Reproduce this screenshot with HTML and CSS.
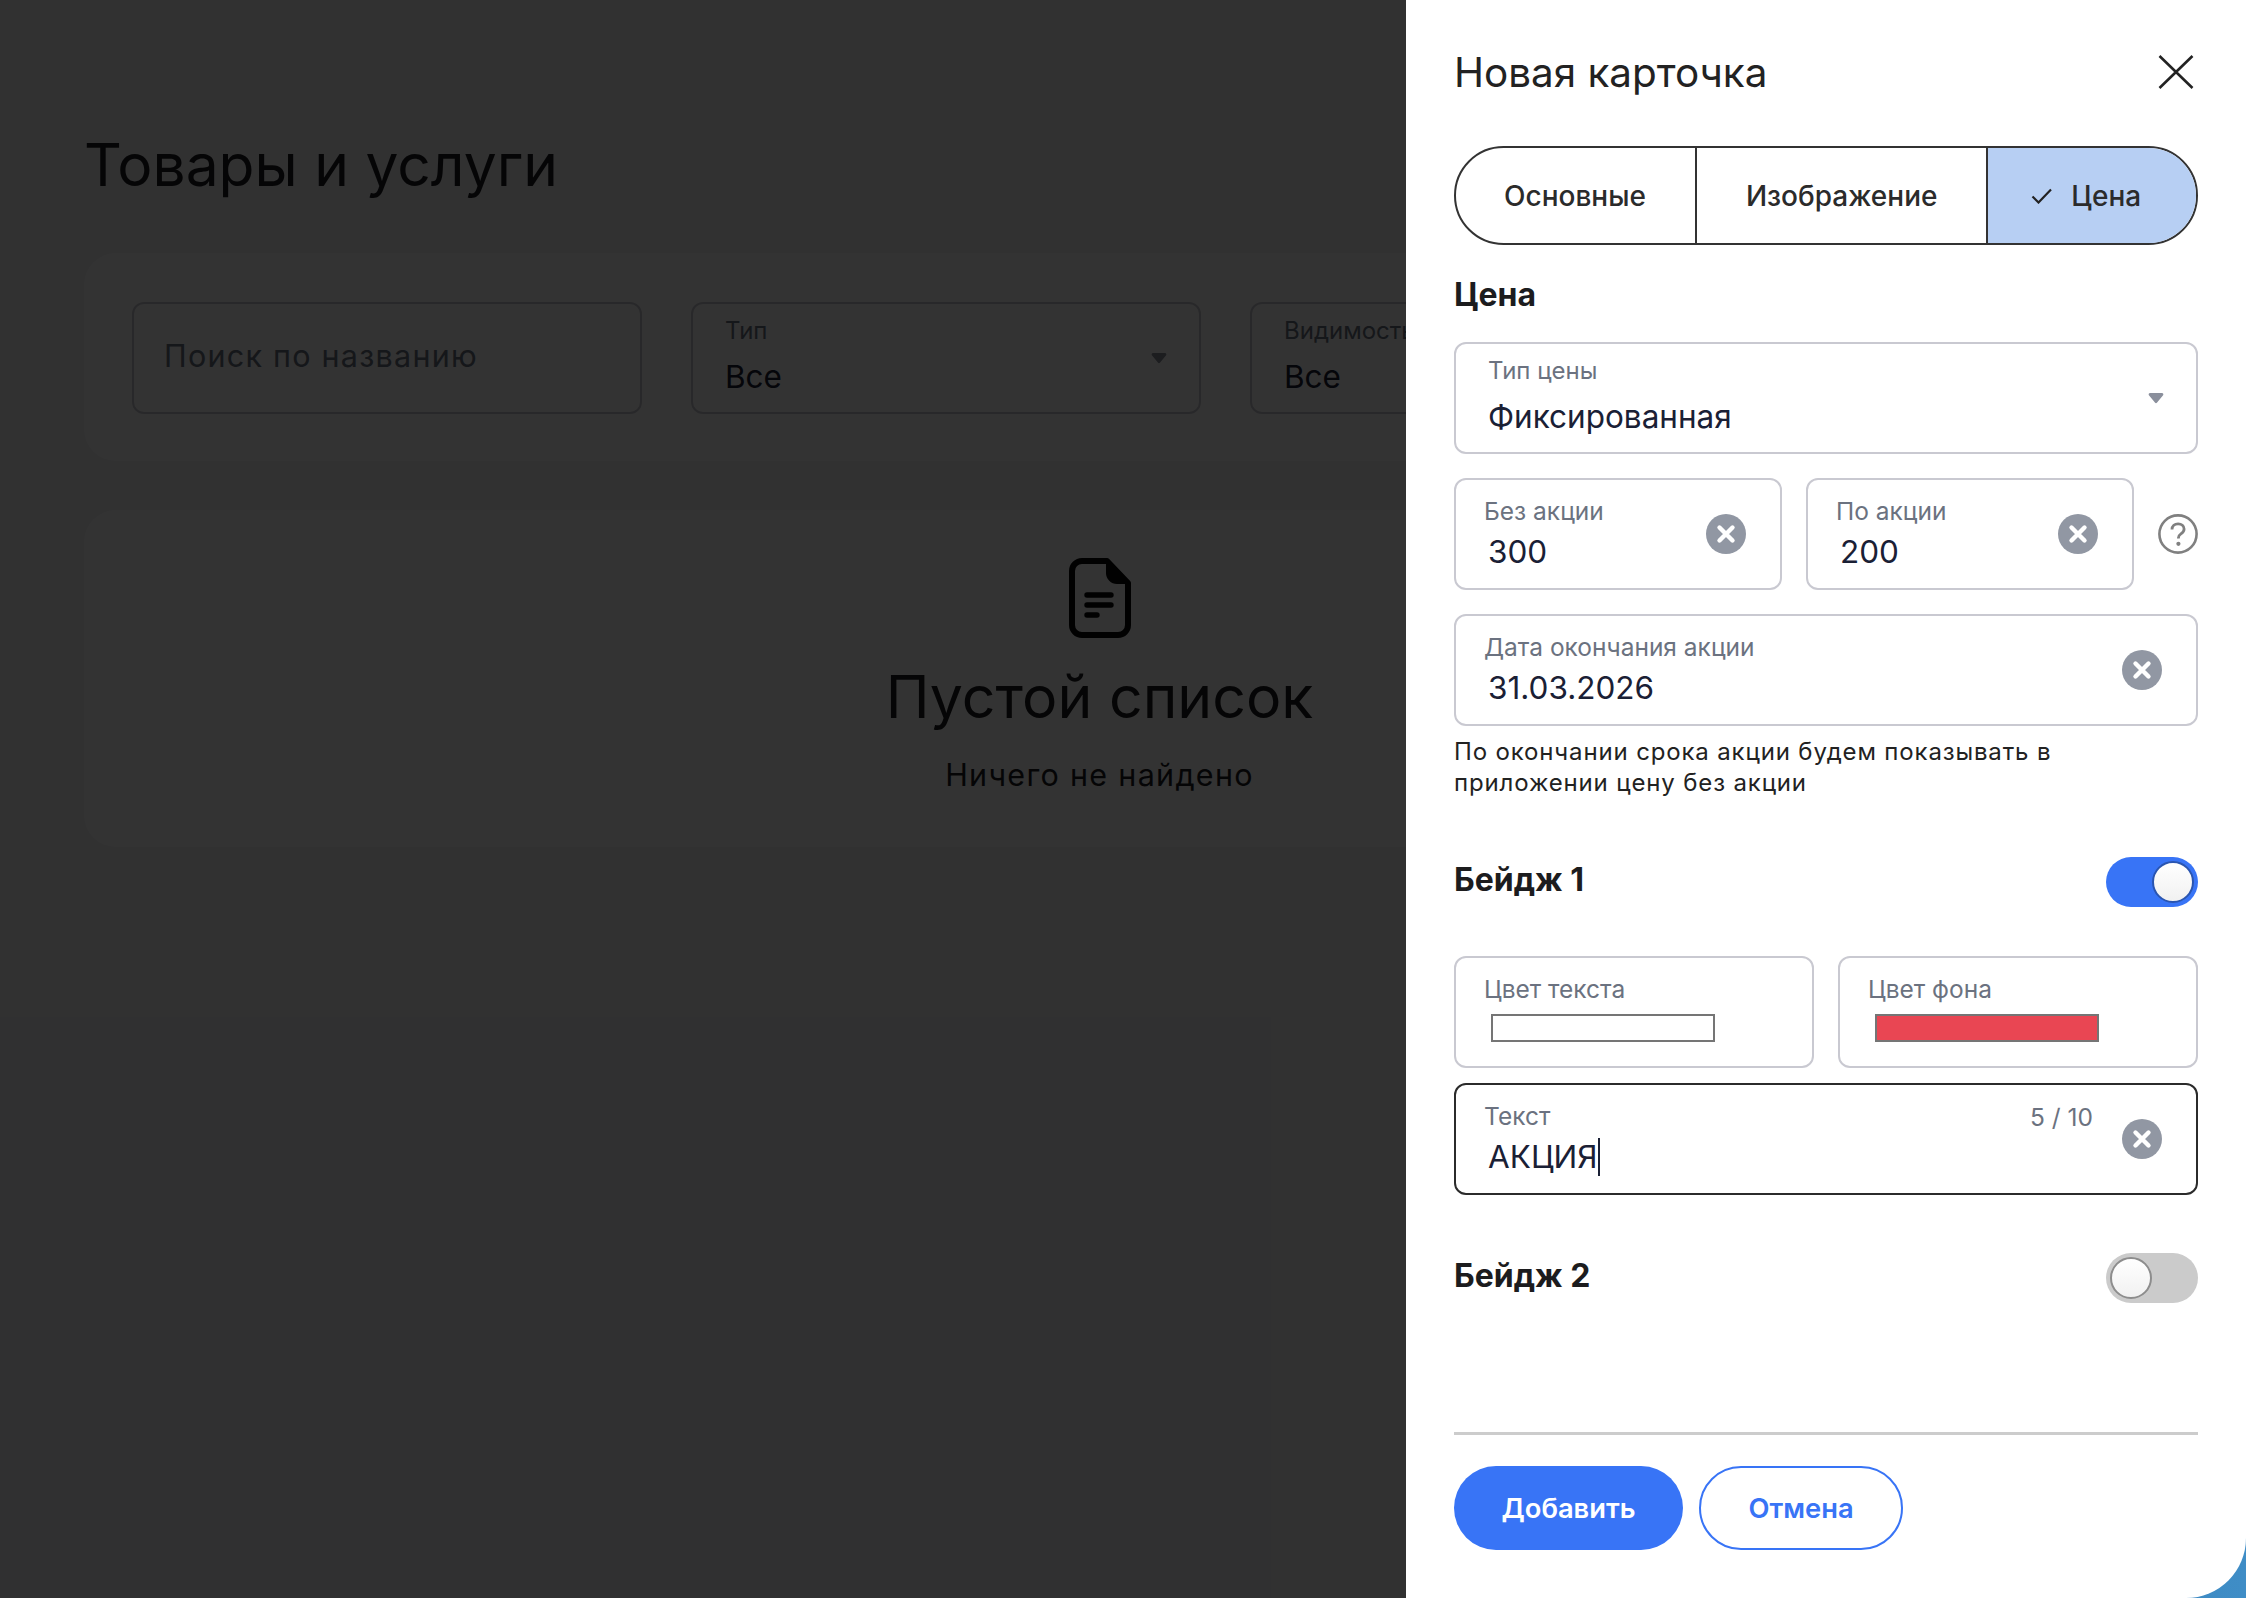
FILE: index.html
```html
<!DOCTYPE html>
<html lang="ru">
<head>
  <meta charset="UTF-8" />
  <meta name="viewport" content="width=device-width, initial-scale=1.0"/>
  <title>Товары и услуги</title>
  <link rel="stylesheet" href="styles.css">
</head>
<body>
  <svg class="sprite" width="0" height="0">
    <symbol id="clear" viewBox="0 0 40 40">
      <circle cx="20" cy="20" r="20" fill="#9197a3"/>
      <path d="M13.5 13.5l13 13M26.5 13.5l-13 13" stroke="#fff" stroke-width="4.4" stroke-linecap="round"/>
    </symbol>
    <symbol id="arrow" viewBox="0 0 16 12">
      <path d="M2 1h12a1.4 1.4 0 0 1 1.1 2.2l-6 7.4a1.4 1.4 0 0 1-2.2 0l-6-7.4A1.4 1.4 0 0 1 2 1z" fill="currentColor"/>
    </symbol>
  </svg>

  <main class="page">
    <h1 class="page-title">Товары и услуги</h1>

    <section class="card filters">
      <div class="field filter">
        <span class="placeholder">Поиск по названию</span>
      </div>
      <div class="field filter select">
        <span class="select-label">Тип</span>
        <span class="select-value">Все</span>
        <svg class="select-arrow"><use href="#arrow"/></svg>
      </div>
      <div class="field filter select">
        <span class="select-label">Видимость</span>
        <span class="select-value">Все</span>
        <svg class="select-arrow"><use href="#arrow"/></svg>
      </div>
    </section>

    <section class="card empty">
      <svg class="empty-icon" width="62" height="80" viewBox="0 0 62 80" fill="none">
        <path d="M13 3h25l21 22v42a10 10 0 0 1-10 10H13A10 10 0 0 1 3 67V13A10 10 0 0 1 13 3z" stroke="#060606" stroke-width="6" stroke-linejoin="round"/>
        <path d="M37 3v12a11 11 0 0 0 11 11h11z" fill="#060606"/>
        <path d="M18 37h24M18 47h24M18 57h10" stroke="#060606" stroke-width="5.400" stroke-linecap="round"/>
      </svg>
      <h2 class="empty-title">Пустой список</h2>
      <p class="empty-text">Ничего не найдено</p>
    </section>
  </main>

  <div class="overlay"></div>

  <div class="drawer-shell">
    <aside class="drawer">
      <header class="drawer-head">
        <h2 class="drawer-title">Новая карточка</h2>
        <button class="close" aria-label="Закрыть">
          <svg width="36" height="36" viewBox="0 0 36 36"><path d="M1.5 2l33 32M34.5 2l-33 32" stroke="#222" stroke-width="2.6" fill="none"/></svg>
        </button>
      </header>

      <div class="tabs">
        <button class="tab">Основные</button>
        <button class="tab">Изображение</button>
        <button class="tab tab-active">
          <svg width="22" height="16" viewBox="0 0 22 16"><path d="M1.5 8.5l6 6L20 1.5" stroke="#222" stroke-width="2.2" fill="none"/></svg>
          Цена
        </button>
      </div>

      <h3 class="section-title">Цена</h3>

      <div class="form-rows">
        <div class="field select">
          <span class="select-label">Тип цены</span>
          <span class="select-value">Фиксированная</span>
          <svg class="select-arrow"><use href="#arrow"/></svg>
        </div>

        <div class="price-row">
          <div class="field input">
            <div class="input-body">
              <span class="input-label">Без акции</span>
              <span class="input-value">300</span>
            </div>
            <svg class="clear"><use href="#clear"/></svg>
          </div>
          <div class="field input">
            <div class="input-body">
              <span class="input-label">По акции</span>
              <span class="input-value">200</span>
            </div>
            <svg class="clear"><use href="#clear"/></svg>
          </div>
          <svg class="help" width="40" height="40" viewBox="0 0 40 40" fill="none">
            <circle cx="20" cy="20" r="18.6" stroke="#808080" stroke-width="2.6"/>
            <path d="M14 15.500c0-3.600 2.700-5.700 6.100-5.700 3.500 0 6 2.100 6 5.200 0 2.500-1.400 3.700-3.200 4.900-1.600 1.100-2.500 2-2.500 4v.6" stroke="#808080" stroke-width="2.800"/>
            <circle cx="20.400" cy="29.800" r="2.100" fill="#808080"/>
          </svg>
        </div>

        <div class="field input">
          <div class="input-body">
            <span class="input-label">Дата окончания акции</span>
            <span class="input-value">31.03.2026</span>
          </div>
          <svg class="clear"><use href="#clear"/></svg>
        </div>
      </div>

      <p class="hint">По окончании срока акции будем показывать в<br>приложении цену без акции</p>

      <div class="badge-head badge-first">
        <h3 class="badge-title">Бейдж 1</h3>
        <span class="toggle toggle-on"><span class="knob"></span></span>
      </div>

      <div class="badge-fields">
        <div class="color-row">
          <div class="field input">
            <div class="input-body color-body">
              <span class="input-label">Цвет текста</span>
              <span class="swatch swatch-white"></span>
            </div>
          </div>
          <div class="field input">
            <div class="input-body color-body">
              <span class="input-label">Цвет фона</span>
              <span class="swatch swatch-red"></span>
            </div>
          </div>
        </div>

        <div class="field input field-focus">
          <div class="input-body">
            <span class="input-label">Текст</span>
            <span class="input-value">АКЦИЯ<span class="caret"></span></span>
          </div>
          <span class="counter">5 / 10</span>
          <svg class="clear"><use href="#clear"/></svg>
        </div>
      </div>

      <div class="badge-head badge-second">
        <h3 class="badge-title">Бейдж 2</h3>
        <span class="toggle"><span class="knob"></span></span>
      </div>

      <footer class="drawer-foot">
        <button class="btn btn-primary">Добавить</button>
        <button class="btn btn-outline">Отмена</button>
      </footer>
    </aside>
  </div>
</body>
</html>
```

FILE: styles.css
```css
* {
  box-sizing: border-box;
  margin: 0;
  padding: 0;
}

html,
body {
  height: 100%;
}

body {
  position: relative;
  overflow: hidden;
  background-color: #f2f2f6;
  color: #1c1c1e;
  font-family: Inter, 'Noto Sans', sans-serif;
}

button {
  border: none;
  background: none;
  font-family: inherit;
  cursor: pointer;
}

.sprite {
  position: absolute;
}

/* page under the overlay */

.page {
  width: 2115px;
  padding: 131px 0 0 84px;
}

.page-title {
  margin-bottom: 54px;
  font-size: 58.7px;
  line-height: 68px;
  font-weight: 400;
}

.card {
  background-color: #fff;
  border-radius: 32px;
}

.filters {
  display: flex;
  gap: 49px;
  padding: 49px 48px 47px;
  margin-bottom: 49px;
}

.filter {
  flex: none;
  width: 510px;
}

.placeholder {
  display: block;
  padding: 35px 0 0 30px;
  font-size: 30.5px;
  line-height: 34px;
  letter-spacing: 1.25px;
  color: #6b7280;
}

.empty {
  display: flex;
  flex-direction: column;
  align-items: center;
  padding: 48px 0 54px;
}

.empty-title {
  margin-top: 25px;
  font-size: 59px;
  line-height: 68px;
  font-weight: 400;
}

.empty-text {
  margin-top: 26px;
  font-size: 30.5px;
  line-height: 36px;
  letter-spacing: 1.3px;
}

.overlay {
  position: absolute;
  inset: 0;
  background-color: rgba(0, 0, 0, 0.8);
}

/* drawer */

.drawer-shell {
  position: absolute;
  top: 0;
  right: 0;
  bottom: 0;
  width: 840px;
  background: linear-gradient(90deg, #2f6fa8, #3f8dc6);
}

.drawer {
  display: flex;
  flex-direction: column;
  height: 100%;
  padding: 0 48px 0 48px;
  background-color: #fff;
  border-bottom-right-radius: 60px;
}

.drawer-head {
  display: flex;
  align-items: center;
  justify-content: space-between;
  height: 146px;
  padding-right: 4px;
}

.drawer-title {
  font-size: 40.4px;
  line-height: 48px;
  font-weight: 400;
  color: #222;
}

.close {
  display: flex;
  margin-top: -2px;
}

.tabs {
  display: flex;
  height: 99px;
  border: 2.5px solid #333;
  border-radius: 50px;
  overflow: hidden;
}

.tab {
  display: flex;
  align-items: center;
  justify-content: center;
  gap: 18px;
  padding: 0 49px;
  font-size: 28px;
  font-weight: 500;
  color: #2b2b2b;
}

.tab:first-child {
  padding-left: 48px;
}

.tab + .tab {
  border-left: 2.5px solid #333;
}

.tab-active {
  flex: 1;
  padding: 0 12px 0 0;
  background-color: #b7cff3;
}

.section-title {
  margin: 30px 0 27px;
  font-size: 32px;
  line-height: 40px;
  font-weight: 700;
  color: #1c1c1e;
}

.form-rows {
  display: flex;
  flex-direction: column;
  gap: 24px;
}

/* fields */

.field {
  position: relative;
  height: 112px;
  background-color: #fff;
  border: 2.5px solid #c9c9d1;
  border-radius: 12px;
}

.select-label {
  position: absolute;
  top: 12px;
  left: 32px;
  font-size: 24px;
  line-height: 30px;
  color: #6b7280;
}

.select-value {
  position: absolute;
  top: 53px;
  left: 32px;
  font-size: 31.5px;
  line-height: 40px;
  color: #1a2035;
}

.select-arrow {
  position: absolute;
  top: 48px;
  right: 32px;
  width: 16px;
  height: 12px;
  color: #8a8f9c;
}

.input {
  display: flex;
  align-items: center;
  padding-right: 34px;
}

.input-body {
  flex: 1;
  display: flex;
  flex-direction: column;
  align-items: flex-start;
  padding-left: 28px;
}

.color-body {
  padding-bottom: 9px;
}

.input-label {
  font-size: 24.5px;
  line-height: 30px;
  color: #6b7280;
}

.input-value {
  position: relative;
  margin: 6px 0 0 4px;
  font-size: 31.5px;
  line-height: 40px;
  color: #1a2035;
}

.clear {
  flex-shrink: 0;
  width: 40px;
  height: 40px;
}

.price-row {
  display: flex;
  align-items: center;
  gap: 24px;
}

.price-row .input {
  flex: none;
  width: 328px;
}

.hint {
  margin-top: 10px;
  font-size: 24px;
  line-height: 31px;
  letter-spacing: 0.85px;
  color: #222;
}

/* badges */

.badge-head {
  display: flex;
  align-items: center;
  justify-content: space-between;
  height: 50px;
}

.badge-first {
  margin-top: 59px;
}

.badge-second {
  margin-top: 58px;
}

.badge-title {
  margin-top: -4px;
  font-size: 32px;
  line-height: 40px;
  font-weight: 700;
  color: #1c1c1e;
}

.toggle {
  display: flex;
  align-items: center;
  width: 92px;
  height: 50px;
  padding: 0 4px;
  background-color: #cbcbcb;
  border-radius: 25px;
}

.toggle-on {
  justify-content: flex-end;
  background-color: #3874f6;
}

.knob {
  width: 42px;
  height: 42px;
  background: linear-gradient(#fff, #f1f1f1);
  border: 2px solid #8d8d8d;
  border-radius: 50%;
}

.toggle-on .knob {
  border-color: #2a55b0;
}

.badge-fields {
  display: flex;
  flex-direction: column;
  gap: 15px;
  margin-top: 49px;
}

.color-row {
  display: flex;
  gap: 24px;
}

.color-row .input {
  flex: 1;
}

.swatch {
  display: block;
  width: 224px;
  height: 28px;
  margin: 10px 0 0 7px;
  border: 2px solid #757575;
}

.swatch-white {
  background-color: #fff;
}

.swatch-red {
  background-color: #e94653;
}

.field-focus {
  border-color: #2b2b2b;
}

.caret {
  position: absolute;
  top: 1px;
  right: -2px;
  width: 2px;
  height: 38px;
  background-color: #1a2035;
}

.counter {
  position: absolute;
  top: 17px;
  right: 103px;
  font-size: 24.5px;
  line-height: 30px;
  color: #6b7280;
}

/* footer */

.drawer-foot {
  display: flex;
  gap: 16px;
  margin-top: auto;
  padding: 31px 0 48px;
  border-top: 3px solid #ccc;
}

.btn {
  height: 84px;
  padding: 0 47.5px;
  border-radius: 42px;
  font-size: 27.300px;
  font-weight: 600;
}

.btn-primary {
  background-color: #3874f6;
  color: #fff;
}

.btn-outline {
  border: 2.5px solid #3874f6;
  color: #3874f6;
}
```
